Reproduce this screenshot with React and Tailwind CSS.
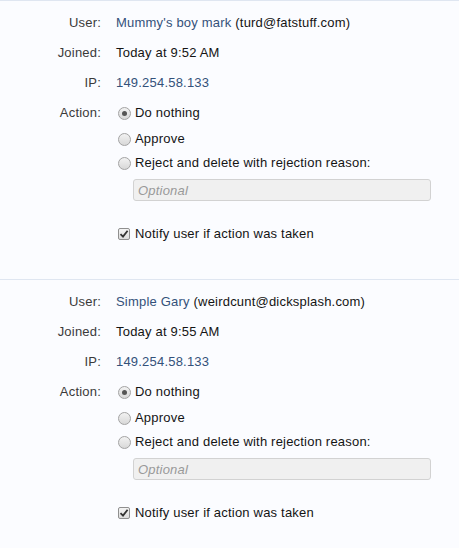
import { useState } from "react";

const users = [
  { name: "Mummy's boy mark", email: "turd@fatstuff.com", joined: "Today at 9:52 AM", ip: "149.254.58.133" },
  { name: "Simple Gary", email: "weirdcunt@dicksplash.com", joined: "Today at 9:55 AM", ip: "149.254.58.133" },
];

const Radio = ({ checked, onClick, label }) => (
  <label className="flex items-center cursor-pointer h-[18px]" onClick={onClick}>
    <span className="w-[13px] h-[13px] rounded-full border border-[#a3a3a3] bg-gradient-to-b from-[#f2f2f2] to-[#d8d8d8] flex items-center justify-center mr-[4px] ml-[2px]">
      {checked && <span className="w-[5px] h-[5px] rounded-full bg-[#555]" />}
    </span>
    <span>{label}</span>
  </label>
);

const Row = ({ label, children, className = "" }) => (
  <div className={`flex ${className}`}>
    <div className="w-[101px] text-right text-[#3a3a3a] leading-[18px]">{label}</div>
    <div className="ml-[15px] flex-1 leading-[18px]">{children}</div>
  </div>
);

const Moderation = ({ user }) => {
  const [action, setAction] = useState(0);
  const [notify, setNotify] = useState(true);

  return (
    <div className="border-t border-[#dfe6f1] pt-[13px] pb-[36px]">
      <Row label="User:">
        <span className="text-[#34517a]">{user.name}</span> ({user.email})
      </Row>
      <Row label="Joined:" className="mt-[12px]">
        {user.joined}
      </Row>
      <Row label="IP:" className="mt-[12px]">
        <span className="text-[#34517a]">{user.ip}</span>
      </Row>
      <Row label="Action:" className="mt-[12px]">
        <Radio checked={action === 0} onClick={() => setAction(0)} label="Do nothing" />
        <div className="mt-[8px]">
          <Radio checked={action === 1} onClick={() => setAction(1)} label="Approve" />
        </div>
        <div className="mt-[6px]">
          <Radio checked={action === 2} onClick={() => setAction(2)} label="Reject and delete with rejection reason:" />
        </div>
        <input
          type="text"
          placeholder="Optional"
          className="mt-[7px] ml-[17px] w-[298px] h-[22px] bg-[#f0f0f0] border border-[#d2d2d2] rounded-[3px] px-[4px] text-[13px] outline-none placeholder:italic placeholder:text-[#999]"
        />
        <label className="flex items-center mt-[24px] cursor-pointer h-[18px]" onClick={() => setNotify(!notify)}>
          <span className="w-[12px] h-[12px] border border-[#8f8f8f] rounded-[2px] bg-gradient-to-b from-[#f4f4f4] to-[#dcdcdc] flex items-center justify-center mr-[5px] ml-[2px]">
            {notify && (
              <svg width="10" height="10" viewBox="0 0 10 10">
                <path d="M1.5 5.2 L4 7.6 L8.6 1.8" stroke="#333" strokeWidth="1.8" fill="none" />
              </svg>
            )}
          </span>
          <span>Notify user if action was taken</span>
        </label>
      </Row>
    </div>
  );
};

export default function App() {
  return (
    <div
      className="w-[459px] h-[548px] bg-[#fbfcff] text-[13px] tracking-[0.2px] text-[#141414] overflow-hidden"
      style={{ fontFamily: '"Trebuchet MS", "Liberation Sans", sans-serif' }}
    >
      {users.map((u) => (
        <Moderation key={u.name} user={u} />
      ))}
    </div>
  );
}
